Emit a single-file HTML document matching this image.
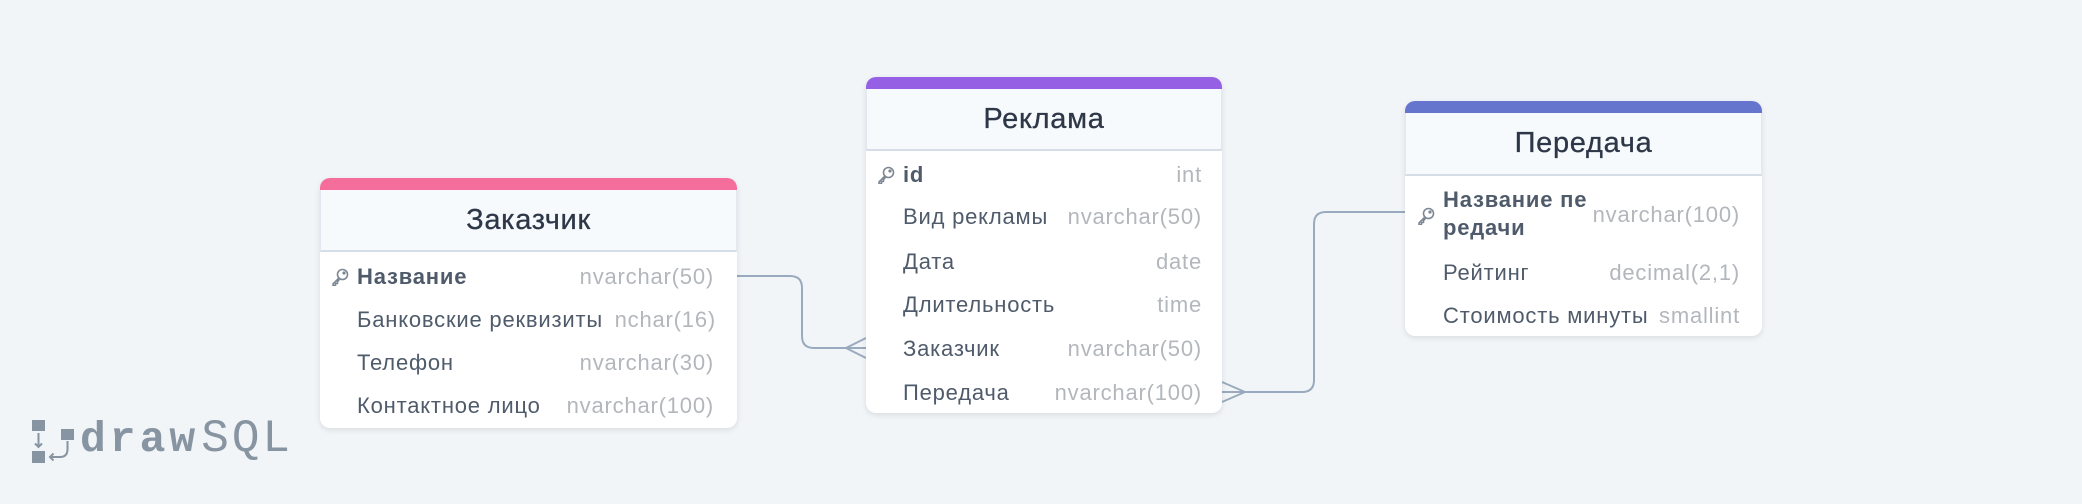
<!DOCTYPE html>
<html><head><meta charset="utf-8"><style>
*{margin:0;padding:0;box-sizing:border-box}
body{width:2082px;height:504px;background:#f1f5f8;position:relative;overflow:hidden;font-family:"Liberation Sans","DejaVu Sans",sans-serif}
.t{position:absolute;background:#fff;border-radius:10px;box-shadow:0 2px 6px rgba(0,0,0,.10);overflow:hidden}
.bar{height:12px}
.hd{background:#f7fafc;border-bottom:2px solid #d5dee8;border-left:1px solid #e2e8f0;border-right:1px solid #e2e8f0;text-align:center;color:#2d3748;font-size:29px;letter-spacing:.7px;-webkit-text-stroke:.3px #2d3748}
.r{position:absolute;left:0;right:0;font-size:22px;letter-spacing:.8px;color:#4f5b6b;height:30px;line-height:30px}
.r .n{position:absolute}
.r .ty{position:absolute;color:#b3b7bc}
.r b{color:#4f5b6b}
.k{position:absolute;width:18px;height:18px}
</style></head><body>
<svg width="2082" height="504" style="position:absolute;left:0;top:0" fill="none" stroke="#9aaabe" stroke-width="2">
<path d="M737 276 H790 Q802 276 802 288 V336 Q802 348 814 348 H866"/>
<path d="M846 348 L866 338 M846 348 L866 358"/>
<path d="M1222 392 H1302 Q1314 392 1314 380 V224 Q1314 212 1326 212 H1405"/>
<path d="M1245 392 L1222 382 M1245 392 L1222 402"/>
</svg>

<svg width="0" height="0" style="position:absolute"><defs><g id="key" fill="none" stroke="#7d8794" stroke-width="1.6" stroke-linecap="round" stroke-linejoin="round"><circle cx="11.5" cy="6.5" r="5"/><path d="M8 10 L2 16 L2 17.5 L4.5 17.5 L4.5 15.5 L6.5 15.5 L6.5 13.5 L8 12"/><circle cx="13" cy="5" r=".8"/></g></defs></svg>

<div class="t" style="left:320px;top:178px;width:417px;height:250px">
<div class="bar" style="background:#f56d9a"></div>
<div class="hd" style="height:62px;line-height:60px">Заказчик</div>
<div class="r" style="top:84px"><svg class="k" style="left:11px;top:6px" viewBox="0 0 18 18"><use href="#key"/></svg><span class="n" style="left:37px"><b>Название</b></span><span class="ty" style="right:23px">nvarchar(50)</span></div>
<div class="r" style="top:127px"><span class="n" style="left:37px">Банковские реквизиты</span><span class="ty" style="right:21px">nchar(16)</span></div>
<div class="r" style="top:170px"><span class="n" style="left:37px">Телефон</span><span class="ty" style="right:23px">nvarchar(30)</span></div>
<div class="r" style="top:213px"><span class="n" style="left:37px">Контактное лицо</span><span class="ty" style="right:23px">nvarchar(100)</span></div>
</div>

<div class="t" style="left:866px;top:77px;width:356px;height:336px">
<div class="bar" style="background:#9560e3"></div>
<div class="hd" style="height:62px;line-height:60px">Реклама</div>
<div class="r" style="top:83px"><svg class="k" style="left:11px;top:6px" viewBox="0 0 18 18"><use href="#key"/></svg><span class="n" style="left:37px"><b>id</b></span><span class="ty" style="right:20px">int</span></div>
<div class="r" style="top:125px"><span class="n" style="left:37px">Вид рекламы</span><span class="ty" style="right:20px">nvarchar(50)</span></div>
<div class="r" style="top:170px"><span class="n" style="left:37px">Дата</span><span class="ty" style="right:20px">date</span></div>
<div class="r" style="top:213px"><span class="n" style="left:37px">Длительность</span><span class="ty" style="right:20px">time</span></div>
<div class="r" style="top:257px"><span class="n" style="left:37px">Заказчик</span><span class="ty" style="right:20px">nvarchar(50)</span></div>
<div class="r" style="top:301px"><span class="n" style="left:37px">Передача</span><span class="ty" style="right:20px">nvarchar(100)</span></div>
</div>

<div class="t" style="left:1405px;top:101px;width:357px;height:235px">
<div class="bar" style="background:#6574cd"></div>
<div class="hd" style="height:63px;line-height:61px">Передача</div>
<div class="r" style="top:85px;height:60px;line-height:28px"><svg class="k" style="left:12px;top:21px" viewBox="0 0 18 18"><use href="#key"/></svg><span class="n" style="left:38px"><b>Название пе<br>редачи</b></span><span class="ty" style="right:22px;top:15px">nvarchar(100)</span></div>
<div class="r" style="top:157px"><span class="n" style="left:38px">Рейтинг</span><span class="ty" style="right:22px">decimal(2,1)</span></div>
<div class="r" style="top:200px"><span class="n" style="left:38px">Стоимость минуты</span><span class="ty" style="right:22px">smallint</span></div>
</div>

<svg width="50" height="46" style="position:absolute;left:31px;top:419px" fill="#8794a1">
<rect x="1" y="1" width="13" height="11"/><rect x="1" y="32" width="13" height="12"/><rect x="30" y="10" width="13" height="11"/>
<path d="M7.5 14 V28 M4 24.5 L7.5 28 L11 24.5" stroke="#8794a1" stroke-width="2" fill="none"/>
<path d="M36.5 22 V30 Q36.5 38 29 38 H19 M22.5 34.5 L19 38 L22.5 41.5" stroke="#8794a1" stroke-width="2" fill="none"/>
</svg>
<div style="position:absolute;left:80px;top:411px;font-family:'Liberation Mono',monospace;font-size:43px;color:#8794a1;line-height:56px;white-space:nowrap"><b style="letter-spacing:4px">draw</b><span style="font-weight:normal;font-size:46px;letter-spacing:3px;margin-left:2px">SQL</span></div>
</body></html>
